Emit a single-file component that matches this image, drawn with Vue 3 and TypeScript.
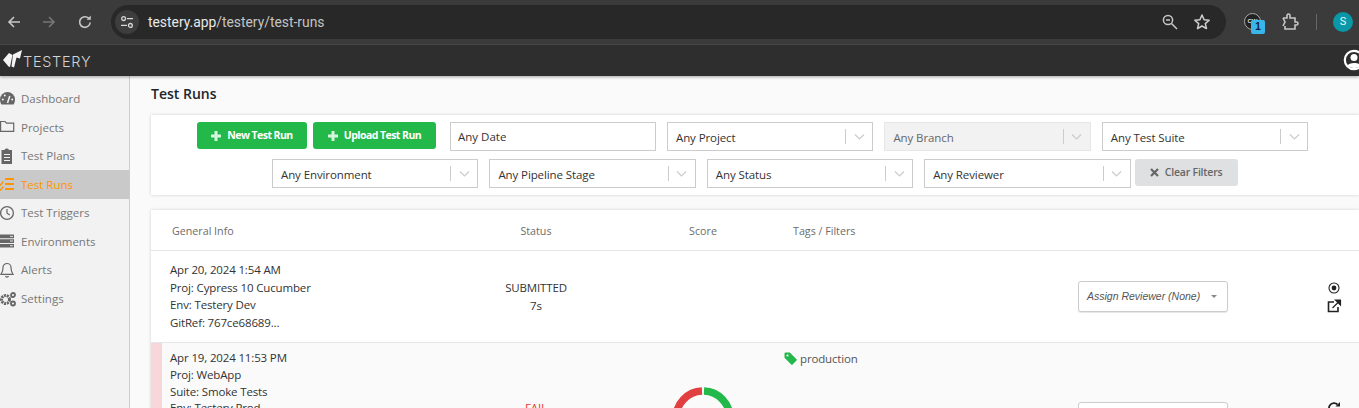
<script setup lang="ts">
interface NavItem { label: string; icon: string; active?: boolean }
const nav: NavItem[] = [
  { label: 'Dashboard', icon: 'gauge' },
  { label: 'Projects', icon: 'folder' },
  { label: 'Test Plans', icon: 'clip' },
  { label: 'Test Runs', icon: 'tasks', active: true },
  { label: 'Test Triggers', icon: 'clock' },
  { label: 'Environments', icon: 'server' },
  { label: 'Alerts', icon: 'bell' },
  { label: 'Settings', icon: 'cogs' },
]
const firstRow = [
  { label: 'Any Project', disabled: false },
  { label: 'Any Branch', disabled: true },
  { label: 'Any Test Suite', disabled: false },
]
const secondRow = ['Any Environment', 'Any Pipeline Stage', 'Any Status', 'Any Reviewer']
</script>

<template>
  <div class="page">
    <header class="browser">
      <svg class="bi" width="16" height="16" viewBox="0 0 16 16"><path d="M14 8H3M8 3L3 8l5 5" fill="none" stroke="#c7c7c7" stroke-width="1.6"/></svg>
      <svg class="bi fwd" width="16" height="16" viewBox="0 0 16 16"><path d="M2 8h11M8 3l5 5-5 5" fill="none" stroke="#777" stroke-width="1.6"/></svg>
      <svg class="bi rel" width="16" height="16" viewBox="0 0 16 16"><path d="M13.2 8.5A5.3 5.3 0 1 1 11.6 4.2" fill="none" stroke="#c7c7c7" stroke-width="1.6"/><path d="M9.6 5.8h4.2V1.6z" fill="#c7c7c7"/></svg>
      <div class="omni">
        <span class="tune">
          <svg width="14" height="14" viewBox="0 0 14 14"><g fill="none" stroke="#d8d8d8" stroke-width="1.3"><circle cx="3.6" cy="3.6" r="1.9"/><path d="M7 3.6h6M1 10.4h6"/><circle cx="10.4" cy="10.4" r="1.9"/></g></svg>
        </span>
        <span class="url"><b>testery.app</b>/testery/test-runs</span>
        <span class="omni-end">
          <svg width="18" height="18" viewBox="0 0 18 18"><g fill="none" stroke="#c7c7c7" stroke-width="1.5"><circle cx="7" cy="7" r="4.6"/><path d="M10.5 10.5L16 16M5 7h4"/></g></svg>
          <svg width="18" height="18" viewBox="0 0 18 18"><path d="M9 2l2.1 4.7 5.1.5-3.9 3.4 1.2 5L9 13l-4.5 2.6 1.2-5-3.9-3.4 5.1-.5z" fill="none" stroke="#d0d0d0" stroke-width="1.5" stroke-linejoin="round"/></svg>
        </span>
      </div>
      <div class="ext">
        <span class="cw">CW<i>1</i></span>
        <svg width="18" height="18" viewBox="0 0 18 18"><path d="M2 5h4V2.500a1.500 1.500 0 0 1 3 0V5h5v4h1.500a1.500 1.500 0 0 1 0 3H14v4H4v-3" fill="none" stroke="#c7c7c7" stroke-width="1.600"/><path d="M2 5l2 4-2 4" fill="none" stroke="#c7c7c7" stroke-width="1.600"/></svg>
        <span class="sep"></span>
        <span class="avatar">S</span>
      </div>
    </header>

    <div class="appbar">
      <svg class="logo" width="21" height="19" viewBox="0 0 21 19"><path d="M1 10l6-7 3.500 2L8 17 6.500 16.500zM11 4.500L20 0l-2 8.500-3.500-1L12 17.500l-2.500-1z" fill="#f4f4f4"/></svg>
      <span class="brand">TESTERY</span>
      <svg class="user" width="24" height="24" viewBox="0 0 24 24"><circle cx="12" cy="12" r="9.200" fill="none" stroke="#fff" stroke-width="2.200"/><circle cx="12" cy="9.500" r="3.500" fill="#fff"/><path d="M5.500 17.500c1.500-3.500 11.500-3.500 13 0-3 3.200-10 3.200-13 0z" fill="#fff"/></svg>
    </div>

    <div class="body">
      <aside class="side">
        <a v-for="n in nav" :key="n.label" class="nav" :class="{ active: n.active }">
          <svg class="nav-i" width="16" height="16" viewBox="0 0 16 16">
            <template v-if="n.icon === 'gauge'"><path d="M0 8.500a7.500 7.500 0 1 1 15 0c0 2-.6 3.800-1.500 5H1.500C.6 12.300 0 10.500 0 8.500z" fill="currentColor"/><path d="M7.500 12l2.300-7" stroke="#f2f2f2" stroke-width="1.500"/><circle cx="2.800" cy="8.500" r="1" fill="#f2f2f2"/><circle cx="4.800" cy="4.500" r="1" fill="#f2f2f2"/><circle cx="12.200" cy="8.500" r="1" fill="#f2f2f2"/></template>
            <path v-else-if="n.icon === 'folder'" d="M.6 2.500h4.400l1.500 1.700h7.200v8.200H.6z" fill="none" stroke="currentColor" stroke-width="1.200"/>
            <template v-else-if="n.icon === 'clip'"><path d="M1.500 2h3a2.500 2.500 0 0 1 4.500 0h3v14h-10.500z" fill="currentColor"/><path d="M4 6.500h6M4 9.500h6M4 12.500h6" stroke="#f2f2f2" stroke-width="1.200"/></template>
            <template v-else-if="n.icon === 'tasks'"><path d="M5 3h9M5 8h9M5 13h9" stroke="currentColor" stroke-width="2.200"/><path d="M-1 7.500l1.500 1.500 3-3.500M-1 12.500l1.500 1.500 3-3.500" fill="none" stroke="currentColor" stroke-width="1.300"/></template>
            <template v-else-if="n.icon === 'clock'"><circle cx="7" cy="8" r="6.400" fill="none" stroke="currentColor" stroke-width="1.300"/><path d="M7 4v4.200l2.800 1.700" fill="none" stroke="currentColor" stroke-width="1.200"/></template>
            <template v-else-if="n.icon === 'server'"><path d="M0 1.500h14v3.700H0zM0 6.200h14v3.700H0zM0 10.900h14v3.700H0z" fill="currentColor"/><path d="M10 3.400h3M10 8h3M10 12.700h3" stroke="#f2f2f2" stroke-width=".9"/></template>
            <path v-else-if="n.icon === 'bell'" d="M7 1.500a4 4 0 0 1 4 4c0 4 1.500 5.800 2 6.800H1c.5-1 2-2.800 2-6.800a4 4 0 0 1 4-4zM5.500 14a1.600 1.600 0 0 0 3 0" fill="none" stroke="currentColor" stroke-width="1.200"/>
            <template v-else><circle cx="5.500" cy="8.500" r="4" fill="none" stroke="currentColor" stroke-width="3" stroke-dasharray="2 .8"/><circle cx="13" cy="4" r="2" fill="none" stroke="currentColor" stroke-width="1.800"/><circle cx="13" cy="12.500" r="2" fill="none" stroke="currentColor" stroke-width="1.800"/></template>
          </svg>
          <span>{{ n.label }}</span>
        </a>
      </aside>

      <main class="main">
        <h1>Test Runs</h1>
        <section class="filters">
          <div class="f-row one">
            <button class="btn">
              <svg class="plus" width="10" height="10" viewBox="0 0 10 10"><path d="M5 0v10M0 5h10" stroke="#d5f5dd" stroke-width="3"/></svg>New Test Run
            </button>
            <button class="btn up">
              <svg class="plus" width="10" height="10" viewBox="0 0 10 10"><path d="M5 0v10M0 5h10" stroke="#d5f5dd" stroke-width="3"/></svg>Upload Test Run
            </button>
            <input class="date" value="Any Date" />
            <div v-for="s in firstRow" :key="s.label" class="sel" :class="{ off: s.disabled }">
              <span class="sel-t">{{ s.label }}</span>
              <span class="sel-a"><svg width="11" height="6" viewBox="0 0 11 6"><path d="M1 .5l4.500 4.500L10 .5" fill="none" stroke="#ccc" stroke-width="1.200"/></svg></span>
            </div>
          </div>
          <div class="f-row two">
            <div v-for="s in secondRow" :key="s" class="sel">
              <span class="sel-t">{{ s }}</span>
              <span class="sel-a"><svg width="11" height="6" viewBox="0 0 11 6"><path d="M1 .5l4.500 4.500L10 .5" fill="none" stroke="#ccc" stroke-width="1.200"/></svg></span>
            </div>
            <button class="clear">
              <svg class="x" width="9" height="9" viewBox="0 0 9 9"><path d="M1 1l7 7M8 1L1 8" stroke="#666" stroke-width="2.200"/></svg>Clear Filters
            </button>
          </div>
        </section>

        <section class="table">
          <div class="thead">
            <span class="c-info h">General Info</span>
            <span class="c-status">Status</span>
            <span class="c-score">Score</span>
            <span class="c-tags">Tags / Filters</span>
          </div>
          <div class="tr first">
            <div class="c-info">
              <p>Apr 20, 2024 1:54 AM</p>
              <p>Proj: Cypress 10 Cucumber</p>
              <p>Env: Testery Dev</p>
              <p>GitRef: 767ce68689...</p>
            </div>
            <div class="c-status">
              <p>SUBMITTED</p>
              <p>7s</p>
            </div>
            <div class="c-score"></div>
            <div class="c-tags"></div>
            <div class="assign"><em>Assign Reviewer (None)</em><i></i></div>
            <div class="acts">
              <svg width="12" height="12" viewBox="0 0 12 12"><circle cx="6" cy="6" r="5" fill="none" stroke="#222" stroke-width="1.100"/><circle cx="6" cy="6" r="2.400" fill="#222"/></svg>
              <svg width="15" height="14" viewBox="0 0 15 14"><path d="M7 3H1.500v9.500H11V8" fill="none" stroke="#222" stroke-width="1.600"/><path d="M5.500 9L12 2.500M8.500 1h5v5z" fill="#222" stroke="#222" stroke-width="1.200"/></svg>
            </div>
          </div>
          <div class="tr second">
            <span class="stripe"></span>
            <div class="c-info">
              <p>Apr 19, 2024 11:53 PM</p>
              <p>Proj: WebApp</p>
              <p>Suite: Smoke Tests</p>
              <p>Env: Testery Prod</p>
            </div>
            <div class="c-status fail-cell"><p class="fail">FAIL</p></div>
            <div class="c-score donut-cell">
              <svg width="62" height="62" viewBox="0 0 62 62"><path d="M32 4.020A27 27 0 0 1 32 57.980" fill="none" stroke="#22b84a" stroke-width="7.500"/><path d="M30 4.020A27 27 0 0 0 30 57.980" fill="none" stroke="#e04040" stroke-width="7.500"/></svg>
            </div>
            <div class="c-tags tag">
              <svg width="13" height="13" viewBox="0 0 13 13"><path d="M.5 1.500A1 1 0 0 1 1.500.5h4.300l6.700 6.700a1 1 0 0 1 0 1.400l-3.900 3.900a1 1 0 0 1-1.400 0L.5 5.800z" fill="#22b84a"/><circle cx="3.500" cy="3.500" r="1.100" fill="#fafafa"/></svg>
              <span>production</span>
            </div>
            <div class="assign low"><em>Assign Reviewer (None)</em><i></i></div>
            <div class="acts low">
              <svg width="14" height="14" viewBox="0 0 14 14"><path d="M12 7.500A5 5 0 1 1 10.500 3.500" fill="none" stroke="#222" stroke-width="1.800"/><path d="M8.500 5.500H13V1z" fill="#222"/></svg>
            </div>
          </div>
        </section>
      </main>
    </div>
  </div>
</template>

<style>
html, body { margin: 0; height: 408px; overflow: hidden; }
</style>

<style scoped>
.page { width: 1359px; height: 408px; overflow: hidden; display: flex; flex-direction: column; font-family: "Open Sans", sans-serif; font-size: 11.500px; color: #212529; }
.browser { height: 45px; box-sizing: border-box; flex: none; background: #3b3b3b; border-bottom: 1px solid #4a4a4a; display: flex; align-items: center; padding: 0 0 1px 6px; }
.bi { flex: none; }
.fwd { margin-left: 19px; }
.rel { margin-left: 20px; }
.omni { margin-left: 18px; flex: none; width: 1115px; height: 34px; border-radius: 17px; background: #282828; display: flex; align-items: center; padding: 0 15px 0 4px; box-sizing: border-box; }
.tune { width: 24px; height: 24px; border-radius: 50%; background: #3d3d3d; display: flex; align-items: center; justify-content: center; }
.url { margin-left: 9px; font: 13.850px Roboto, sans-serif; color: #c4c4c4; }
.url b { font-weight: 400; color: #e8e8e8; }
.omni-end { margin-left: auto; display: flex; gap: 14px; }
.ext { display: flex; align-items: center; flex: none; margin-left: 18px; }
.cw { position: relative; width: 15px; height: 15px; border-radius: 50%; border: 1px solid #aaa; background: #222; color: #ddd; font: 700 6px/15px "Liberation Sans", sans-serif; text-align: center; }
.cw i { position: absolute; left: 6px; top: 6px; width: 14px; height: 14px; border-radius: 2px; background: #38b6ea; color: #123; font: 700 10px/14px "Liberation Sans", sans-serif; }
.ext svg { margin-left: 20px; }
.sep { width: 1px; height: 16px; background: #666; margin-left: 17px; }
.avatar { width: 20px; height: 20px; margin-left: 16px; border-radius: 50%; background: #0a97a8; color: #e8f8fa; font: 11px/20px Roboto, sans-serif; text-align: center; }

.appbar { height: 31px; flex: none; background: #2e2e2e; display: flex; align-items: center; box-shadow: 0 1px 3px rgba(0,0,0,.35); position: relative; z-index: 1; }
.logo { margin: -3px 0 0 2px; flex: none; }
.brand { margin: 4px 0 0 0; font: 300 14.500px/1 Inter, sans-serif; letter-spacing: .7px; color: #d4d4d4; }
.user { margin-left: auto; margin-right: -7px; flex: none; margin-top: -1px; }

.body { flex: 1; display: flex; min-height: 0; }
.side { width: 130px; flex: none; box-sizing: border-box; background: #f2f2f2; border-right: 1px solid #ccc; padding-top: 8.300px; }
.nav { display: flex; align-items: center; height: 28.570px; color: #777; font-size: 11.500px; white-space: nowrap; }
.nav.active { background: #c9c9c9; color: #ff9500; }
.nav-i { flex: none; width: 16px; height: 16px; margin-right: 5px; color: #666; overflow: visible; }
.nav.active .nav-i { color: #ff9500; }

.main { flex: 1; min-width: 0; background: #fafafa; padding: 0 0 0 21px; }
.main h1 { margin: 0; height: 39px; font-size: 14px; font-weight: 600; line-height: 35px; color: #212529; }
.filters { height: 80px; box-sizing: border-box; background: #fff; box-shadow: 0 0 3px rgba(0,0,0,.18); padding-top: 7px; }
.f-row { display: flex; align-items: flex-start; }
.f-row.one { padding-left: 46px; height: 37px; }
.f-row.two { padding-left: 121px; }
.btn { height: 27px; border: 0; border-radius: 3px; background: #22b84a; color: #fff; font: 700 10.500px/27px "Open Sans", sans-serif; letter-spacing: -.55px; padding: 0; width: 110px; margin-right: 6px; white-space: nowrap; display: flex; align-items: center; justify-content: center; }
.btn.up { width: 123px; margin-right: 14px; }
.plus { margin-right: 6px; flex: none; }
.date { box-sizing: border-box; width: 206px; height: 29px; border: 1px solid #ccc; padding: 0 7px; font: 11.500px "Open Sans", sans-serif; color: #333; margin-right: 11px; outline: none; border-radius: 0; }
.sel { box-sizing: border-box; width: 206.400px; height: 29px; border: 1px solid #ccc; background: #fff; display: flex; align-items: center; margin-right: 11px; padding-left: 8px; color: #333; flex: none; letter-spacing: -.1px; }
.sel-t { flex: 1; white-space: nowrap; padding-top: 1px; }
.sel-a { width: 27px; height: 15px; border-left: 1px solid #ccc; display: flex; align-items: center; justify-content: center; box-sizing: border-box; }
.sel.off { background: #f2f2f2; border-color: #e6e6e6; color: #666; }
.two .sel:nth-child(4) { margin-right: 4px; }
.clear { height: 27px; width: 103px; border: 0; border-radius: 3px; background: #dee0e2; color: #666; font: 600 10.500px/27px "Open Sans", sans-serif; letter-spacing: -.2px; padding: 0; white-space: nowrap; display: flex; align-items: center; justify-content: center; }
.x { margin-right: 6px; flex: none; }

.table { margin-top: 15px; background: #fff; box-shadow: 0 0 3px rgba(0,0,0,.18); height: 260px; }
.thead { height: 41px; box-sizing: border-box; border-bottom: 1px solid #e6e6e6; display: flex; align-items: center; color: #6c6c6c; font-size: 10.700px; padding-top: 1px; }
.c-info { width: 298px; flex: none; padding-left: 19px; box-sizing: border-box; }
.c-info.h { padding-left: 21px; }
.c-status { width: 174px; flex: none; text-align: center; }
.c-score { width: 160px; flex: none; text-align: center; }
.c-tags { width: 285px; flex: none; padding-left: 10px; box-sizing: border-box; }
p { margin: 0; }
.tr { display: flex; position: relative; font-size: 11.500px; letter-spacing: -.15px; color: #333; }
.tr .c-info p { line-height: 17.500px; }
.first { height: 91px; align-items: center; border-bottom: 1px solid #e6e6e6; }
.first .c-info { padding-bottom: 1px; }
.first .c-status p { line-height: 18px; }
.second { height: 120px; background: #fafafa; padding-top: 7px; box-sizing: border-box; align-items: flex-start; }
.second .c-info p { line-height: 16.800px; }
.stripe { position: absolute; left: 0; top: 0; bottom: 0; width: 11px; background: #f8d7da; }
.fail-cell { padding-top: 49px; box-sizing: border-box; }
.fail { color: #e8382a; line-height: 17px; }
.donut-cell { padding-top: 37px; box-sizing: border-box; height: 110px; }
.donut-cell svg { display: block; margin: 0 auto; }
.tag { display: flex; align-items: center; margin-left: 1px; padding-left: 0; width: 284px; height: 16px; color: #555; }
.tag svg { margin-right: 3px; flex: none; }
.assign { box-sizing: border-box; flex: none; width: 150px; height: 31px; border: 1px solid #ccc; border-radius: 3px; background: #fff; display: flex; align-items: center; padding: 0 0 1px 8px; font: italic 10.500px "Liberation Sans", sans-serif; letter-spacing: 0; color: #555; box-shadow: 0 1px 1px rgba(0,0,0,.1); margin-left: 10px; }
.assign em { flex: 1; white-space: nowrap; }
.assign i { width: 0; height: 0; border: 3.500px solid transparent; border-top-color: #888; border-bottom: 0; margin-right: 10px; }
.acts { width: 32px; margin-left: 90px; display: flex; flex-direction: column; align-items: center; gap: 5px; flex: none; padding-top: 2px; }
.low.assign { margin-top: 52px; }
.low.acts { margin-top: 51px; padding-top: 0; }
</style>
